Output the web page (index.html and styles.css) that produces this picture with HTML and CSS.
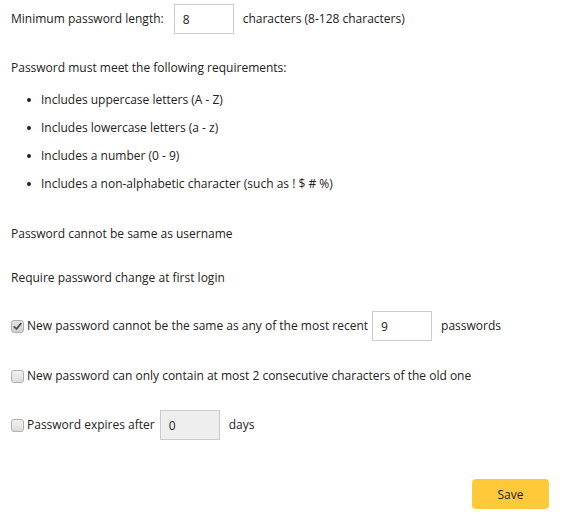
FILE: index.html
```html
<!DOCTYPE html>
<html>
<head>
<meta charset="utf-8">
<link rel="stylesheet" href="styles.css">
</head>
<body>
<div class="page">
  <div class="row row-min">
    <span class="label">Minimum password length:</span>
    <span class="field field-min">8</span>
    <span class="suffix">characters (8-128 characters)</span>
  </div>

  <p class="line line-req">Password must meet the following requirements:</p>
  <ul class="reqs">
    <li>Includes uppercase letters (A - Z)</li>
    <li>Includes lowercase letters (a - z)</li>
    <li>Includes a number (0 - 9)</li>
    <li>Includes a non-alphabetic character (such as ! $ # %)</li>
  </ul>

  <p class="line line-user">Password cannot be same as username</p>
  <p class="line line-first">Require password change at first login</p>

  <div class="row row-recent">
    <span class="cb cb-on"><svg width="9" height="9" viewBox="0 0 9 9"><path d="M1.3 4.8 L3.5 7 L7.8 1.6" fill="none" stroke="#4a4a4a" stroke-width="1.7" stroke-linecap="round" stroke-linejoin="round"/></svg></span>
    <span class="cb-text">New password cannot be the same as any of the most recent</span>
    <span class="field field-recent">9</span>
    <span class="suffix">passwords</span>
  </div>

  <div class="row row-consec">
    <span class="cb"></span>
    <span class="cb-text">New password can only contain at most 2 consecutive characters of the old one</span>
  </div>

  <div class="row row-expire">
    <span class="cb"></span>
    <span class="cb-text">Password expires after</span>
    <span class="field field-expire disabled">0</span>
    <span class="suffix suffix-days">days</span>
  </div>

  <div class="actions">
    <button class="save">Save</button>
  </div>
</div>
</body>
</html>
```
FILE: styles.css
```css
html, body {
  margin: 0;
  padding: 0;
  background: #ffffff;
}
body {
  font-family: "Open Sans", "Liberation Sans", sans-serif;
  font-size: 12px;
  color: #222222;
  line-height: 16px;
}
.page {
  padding: 4px 14px 0 11px;
}
.row {
  display: flex;
  align-items: center;
  height: 30px;
}
.field {
  box-sizing: border-box;
  width: 60px;
  height: 30px;
  border: 1px solid #cccccc;
  background: #ffffff;
  padding: 0 8px;
  display: flex;
  align-items: center;
  padding-top: 2px;
}
.field.disabled {
  background: #eeeeee;
}
.field-min {
  margin-left: 10px;
}
.suffix {
  margin-left: 9px;
}
.line {
  margin: 0;
}
.line-req {
  margin-top: 26px;
}
.reqs {
  list-style: none;
  margin: 16px 0 0 0;
  padding: 0;
}
.reqs li {
  display: flex;
  align-items: center;
  margin-bottom: 12px;
}
.reqs li:last-child {
  margin-bottom: 0;
}
.reqs li::before {
  content: "";
  width: 4px;
  height: 4px;
  border-radius: 50%;
  background: #222222;
  margin-left: 16px;
  margin-right: 10px;
}
.line-user {
  margin-top: 34px;
}
.line-first {
  margin-top: 28px;
}
.row-recent {
  margin-top: 25px;
}
.cb {
  box-sizing: border-box;
  width: 13px;
  height: 13px;
  border: 1px solid #b0b0b0;
  border-radius: 3px;
  background: linear-gradient(#f2f2f2, #dcdcdc);
  display: flex;
  align-items: center;
  justify-content: center;
  flex: none;
}
.cb-on {
  background: linear-gradient(#e4e4e4, #cfcfcf);
}
.cb-text {
  margin-left: 3px;
}
.field-recent {
  margin-left: 4px;
}
.row-recent .suffix {
  margin-left: 9px;
}
.row-consec {
  height: 16px;
  margin-top: 27px;
}
.row-expire {
  margin-top: 26px;
}
.field-expire {
  margin-left: 5px;
}
.suffix-days {
  margin-left: 9px;
}
.actions {
  display: flex;
  justify-content: flex-end;
  margin-top: 39px;
}
.save {
  width: 77px;
  height: 30px;
  border: none;
  border-radius: 4px;
  background: #ffc93a;
  font-family: "Open Sans", "Liberation Sans", sans-serif;
  font-size: 12px;
  color: #222222;
  padding: 0;
  padding-top: 1px;
}
```
